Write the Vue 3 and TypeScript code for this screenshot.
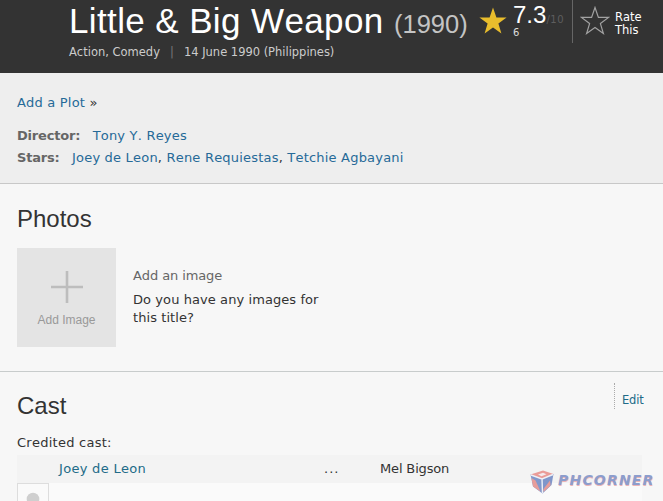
<template>
  <div class="page">
    <!-- Title bar -->
    <header class="title-bar">
      <div class="heading">
        <h1 class="title">
          <span class="name">Little &amp; Big Weapon</span>
          <span class="year">(1990)</span>
        </h1>
        <div class="meta">
          <span class="genres">Action, Comedy</span>
          <span class="ghost">|</span>
          <span class="release">14 June 1990 (Philippines)</span>
        </div>
      </div>
      <div class="rating">
        <svg class="star" viewBox="0 0 30 30">
          <path :d="starPath" fill="#e9bd2c" />
        </svg>
        <div class="score">
          <div class="value">7.3<span class="outof">/10</span></div>
          <div class="votes">6</div>
        </div>
      </div>
      <div class="rate">
        <svg class="star" viewBox="0 0 30 30">
          <path :d="starPath" fill="none" stroke="#a2a2a2" stroke-width="1.2" />
        </svg>
        <div class="rate-label">Rate<br />This</div>
      </div>
    </header>

    <!-- Summary -->
    <section class="summary">
      <div class="plot"><a>Add a Plot</a> »</div>
      <div v-for="credit in credits" :key="credit.label" class="credit">
        <h4>{{ credit.label }}</h4>
        <span class="people">
          <template v-for="(person, i) in credit.people" :key="person">
            <template v-if="i > 0">, </template><a>{{ person }}</a>
          </template>
        </span>
      </div>
    </section>

    <!-- Photos -->
    <section class="photos">
      <h2>Photos</h2>
      <div class="photo-row">
        <div class="add-box">
          <svg class="plus" viewBox="0 0 32 32">
            <path d="M16 0V32M0 16H32" stroke="#bdbdbd" stroke-width="2.6" />
          </svg>
          <span>Add Image</span>
        </div>
        <div class="add-text">
          <div class="add-title">Add an image</div>
          <p>Do you have any images for<br />this title?</p>
        </div>
      </div>
    </section>

    <!-- Cast -->
    <section class="cast">
      <div class="cast-head">
        <h2>Cast</h2>
        <div class="edit"><a>Edit</a></div>
      </div>
      <div class="credited">Credited cast:</div>
      <div class="cast-list">
        <div v-for="member in cast" :key="member.actor" class="cast-row">
          <a class="actor">{{ member.actor }}</a>
          <span class="dots">...</span>
          <span class="character">{{ member.character }}</span>
        </div>
        <div class="cast-row next">
          <div class="thumb">
            <svg viewBox="0 0 30 24">
              <circle cx="15" cy="15" r="6.3" fill="#cfcfcf" />
            </svg>
          </div>
        </div>
      </div>
    </section>

    <div class="watermark">
      <svg class="cube" viewBox="0 0 24 24">
        <path d="M0.5 4.5L13 0.5L23.5 4L12 9Z" fill="#ea9c98" />
        <path d="M0.5 4.5L12 9L12.5 23.5L3 16.5Z" fill="#8299cc" />
        <path d="M23.5 4L12 9L12.5 23.5L21.5 15Z" fill="#8096ca" />
        <path d="M1.5 8L5.5 10.5L10.5 21.5L3 16.5Z" fill="#e79d9a" />
        <path d="M13.5 19L20 10.5L20.5 15.5L13.5 22Z" fill="#e79d9a" />
        <path d="M8 4.5L13 2.8L16.5 4.2L11.5 6.2Z" fill="#f4e9ed" />
        <path d="M1 5L12 9L23 4.5M12 9L12.5 23" fill="none" stroke="#eef0f6" stroke-width="1.4" />
      </svg>
      <span class="brand">PHCORNER</span>
    </div>
  </div>
</template>

<script setup lang="ts">
interface Credit {
  label: string
  people: string[]
}

interface CastMember {
  actor: string
  character: string
}

const starPath = 'M15 1.5L18.4 11.4H28.6L20.4 17.6L23.4 27.6L15 21.6L6.6 27.6L9.6 17.6L1.4 11.4H11.6Z'

const credits: Credit[] = [
  { label: 'Director:', people: ['Tony Y. Reyes'] },
  { label: 'Stars:', people: ['Joey de Leon', 'Rene Requiestas', 'Tetchie Agbayani'] },
]

const cast: CastMember[] = [{ actor: 'Joey de Leon', character: 'Mel Bigson' }]
</script>

<style>
body {
  margin: 0;
}
</style>

<style scoped>
.page {
  position: relative;
  width: 663px;
  height: 501px;
  overflow: hidden;
  background: #f7f7f7;
  color: #333;
  font-family: 'DejaVu Sans', sans-serif;
  font-size: 13px;
  font-kerning: none;
  line-height: 18px;
  white-space: nowrap;
}

a {
  color: #266a98;
}

h1,
h2,
h4,
p {
  margin: 0;
}

/* Title bar */
.title-bar {
  display: flex;
  height: 73px;
  background: #333;
  color: #fff;
}

.heading {
  width: 411px;
  padding-left: 69px;
}

.title {
  display: flex;
  align-items: baseline;
  height: 43px;
  font-family: 'Liberation Sans', Arial, sans-serif;
  font-weight: 400;
  line-height: 41px;
}

.name {
  width: 325px;
  font-size: 35px;
  letter-spacing: 0.38px;
}

.year {
  color: #c4c4c4;
  font-size: 25.5px;
}

.meta {
  display: flex;
  color: #ccc;
  font-size: 11.5px;
  line-height: 18px;
}

.genres {
  width: 101px;
}

.ghost {
  width: 14px;
  color: #777;
}

.release {
  letter-spacing: -0.02px;
}

.rating {
  display: flex;
  width: 92px;
  height: 43px;
  border-right: 1px solid #666;
}

.star {
  width: 30px;
  height: 30px;
}

.rating .star {
  margin: 6px 5px 0 -2px;
}

.score {
  font-family: 'Liberation Sans', Arial, sans-serif;
}

.value {
  height: 27px;
  font-size: 24px;
  line-height: 29px;
}

.outof {
  color: #5e5e5e;
  font-family: 'DejaVu Sans', sans-serif;
  font-size: 10px;
  letter-spacing: 0.6px;
}

.votes {
  color: #ddd;
  font-family: 'DejaVu Sans', sans-serif;
  font-size: 10px;
  line-height: 12px;
}

.rate {
  display: flex;
  padding-left: 7px;
}

.rate .star {
  margin-top: 6px;
}

.rate-label {
  padding: 11px 0 0 5px;
  font-size: 11.5px;
  line-height: 13px;
}

/* Summary */
.summary {
  box-sizing: border-box;
  height: 111px;
  padding: 21px 17px 0;
  border-bottom: 1px solid #c8c8c8;
  background: #eee;
}

.plot {
  margin-bottom: 13px;
  letter-spacing: 0.2px;
}

.credit {
  display: flex;
  line-height: 22px;
}

.credit h4 {
  margin-right: 12.5px;
  color: #666;
  font-size: 13px;
  letter-spacing: -0.2px;
}

.people {
  letter-spacing: 0.2px;
}

/* Photos */
.photos {
  box-sizing: border-box;
  height: 188px;
  padding: 21px 17px 0;
  border-bottom: 1px solid #c8cccc;
}

h2 {
  font-family: 'Liberation Sans', Arial, sans-serif;
  font-size: 24px;
  font-weight: 400;
  line-height: 28px;
}

.photo-row {
  display: flex;
  gap: 17px;
  margin-top: 15px;
}

.add-box {
  display: flex;
  flex-direction: column;
  align-items: center;
  width: 99px;
  height: 99px;
  background: #e4e4e4;
  color: #999;
  font-family: 'Liberation Sans', Arial, sans-serif;
  font-size: 12px;
}

.plus {
  width: 32px;
  height: 32px;
  margin: 23px 0 8px;
}

.add-text {
  padding-top: 19px;
}

.add-title {
  margin-bottom: 6px;
  color: #666;
  letter-spacing: -0.1px;
}

.add-text p {
  letter-spacing: 0.08px;
}

/* Cast */
.cast {
  padding: 20px 17px 0;
}

.cast-head {
  display: flex;
  justify-content: space-between;
  height: 42px;
}

.cast a {
  color: #216b88;
}

.edit {
  width: 24px;
  height: 26px;
  margin: -9px 0 0;
  padding-left: 7px;
  border-left: 1px dotted #aaa;
  font-size: 11.5px;
  letter-spacing: -0.2px;
  line-height: 34px;
}

.credited {
  height: 21px;
  letter-spacing: 0.25px;
}

.cast-row {
  display: flex;
  align-items: center;
  width: 625px;
  height: 28px;
  background: #f3f3f3;
}

.actor {
  width: 265px;
  padding-left: 42px;
  letter-spacing: 0.3px;
}

.dots {
  width: 56px;
  letter-spacing: 1px;
}

.character {
  letter-spacing: -0.15px;
}

.next {
  align-items: flex-start;
  background: #fafafa;
}

.thumb {
  width: 30px;
  height: 40px;
  border: 1px solid #ddd;
}

/* Watermark */
.watermark {
  position: absolute;
  top: 470px;
  left: 530px;
  display: flex;
  gap: 4px;
}

.cube {
  width: 24px;
  height: 24px;
}

.brand {
  color: #8c9dcd;
  font-size: 14px;
  font-style: italic;
  font-weight: 700;
  letter-spacing: 1.2px;
  line-height: 20px;
  text-shadow: 0.5px 1px 0 #ecb4b6;
}
</style>
